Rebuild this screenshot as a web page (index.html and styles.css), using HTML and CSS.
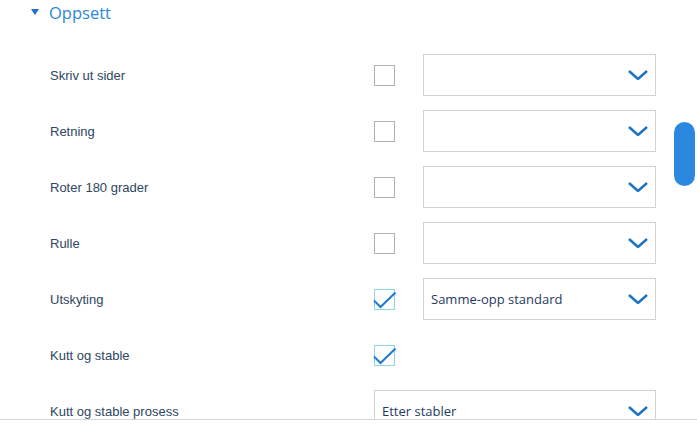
FILE: index.html
```html
<!DOCTYPE html>
<html lang="no">
<head>
<meta charset="utf-8">
<title>Oppsett</title>
<link rel="stylesheet" href="styles.css">
</head>
<body>
<div class="panel">
  <div class="section-head">
    <span class="caret"></span>
    <span class="section-title">Oppsett</span>
  </div>
  <div class="rows">
    <div class="row">
      <span class="label">Skriv ut sider</span>
      <span class="check"></span>
      <div class="select"><span class="value"></span><svg class="chev" width="20" height="10" viewBox="0 0 20 10"><polyline points="1,1 10,9 19,1"/></svg></div>
    </div>
    <div class="row">
      <span class="label">Retning</span>
      <span class="check"></span>
      <div class="select"><span class="value"></span><svg class="chev" width="20" height="10" viewBox="0 0 20 10"><polyline points="1,1 10,9 19,1"/></svg></div>
    </div>
    <div class="row">
      <span class="label">Roter 180 grader</span>
      <span class="check"></span>
      <div class="select"><span class="value"></span><svg class="chev" width="20" height="10" viewBox="0 0 20 10"><polyline points="1,1 10,9 19,1"/></svg></div>
    </div>
    <div class="row">
      <span class="label">Rulle</span>
      <span class="check"></span>
      <div class="select"><span class="value"></span><svg class="chev" width="20" height="10" viewBox="0 0 20 10"><polyline points="1,1 10,9 19,1"/></svg></div>
    </div>
    <div class="row">
      <span class="label">Utskyting</span>
      <span class="check checked"><svg class="tick" width="22" height="21" viewBox="0 0 22 21"><polyline points="0,11.5 6.5,18 21.5,3.5"/></svg></span>
      <div class="select"><span class="value">Samme-opp standard</span><svg class="chev" width="20" height="10" viewBox="0 0 20 10"><polyline points="1,1 10,9 19,1"/></svg></div>
    </div>
    <div class="row">
      <span class="label">Kutt og stable</span>
      <span class="check checked"><svg class="tick" width="22" height="21" viewBox="0 0 22 21"><polyline points="0,11.5 6.5,18 21.5,3.5"/></svg></span>
    </div>
    <div class="row">
      <span class="label">Kutt og stable prosess</span>
      <div class="select wide"><span class="value">Etter stabler</span><svg class="chev" width="20" height="10" viewBox="0 0 20 10"><polyline points="1,1 10,9 19,1"/></svg></div>
    </div>
  </div>
  <div class="scroll-thumb"></div>
</div>
</body>
</html>
```
FILE: styles.css
```css
html, body {
  margin: 0;
  padding: 0;
  background: #ffffff;
}

.panel {
  position: relative;
  height: 419px;
  overflow: hidden;
  border-bottom: 1px solid #d6d6d6;
  font-family: "Liberation Sans", Arial, sans-serif;
}

.section-head {
  display: flex;
  align-items: center;
  height: 26px;
  padding-left: 31px;
}

.caret {
  width: 0;
  height: 0;
  border-left: 4px solid transparent;
  border-right: 4px solid transparent;
  border-top: 6px solid #1a73c8;
  margin-right: 10px;
  margin-top: -2px;
}

.section-title {
  font-family: "Open Sans", "Noto Sans", sans-serif;
  font-size: 16.5px;
  color: #2b88d8;
  line-height: 26px;
}

.rows {
  margin-top: 21px;
  padding-left: 50px;
}

.row {
  display: grid;
  grid-template-columns: 324px 49px 233px;
  align-items: center;
  height: 56px;
}

.label {
  font-size: 13px;
  color: #2d4661;
}

.check {
  position: relative;
  box-sizing: border-box;
  width: 21px;
  height: 21px;
  border: 1px solid #aeb2b2;
  background: #fff;
}

.check.checked {
  border-color: #8dd5ee;
}

.tick {
  position: absolute;
  left: -1px;
  top: -1px;
  overflow: visible;
}

.tick polyline {
  fill: none;
  stroke: #1d78d0;
  stroke-width: 2;
}

.select {
  box-sizing: border-box;
  height: 42px;
  border: 1px solid #d2d2d2;
  display: flex;
  align-items: center;
  justify-content: space-between;
  padding: 0 7px 0 7px;
  background: #fff;
}

.select.wide {
  grid-column: 2 / 4;
}

.value {
  font-family: "Open Sans", "Noto Sans", sans-serif;
  font-size: 13px;
  color: #1f3a5f;
}

.chev polyline {
  fill: none;
  stroke: #1a73c8;
  stroke-width: 2.5;
}

.scroll-thumb {
  position: absolute;
  left: 674px;
  top: 122px;
  width: 21px;
  height: 64px;
  border-radius: 10.5px;
  background: #2b88df;
}
```
